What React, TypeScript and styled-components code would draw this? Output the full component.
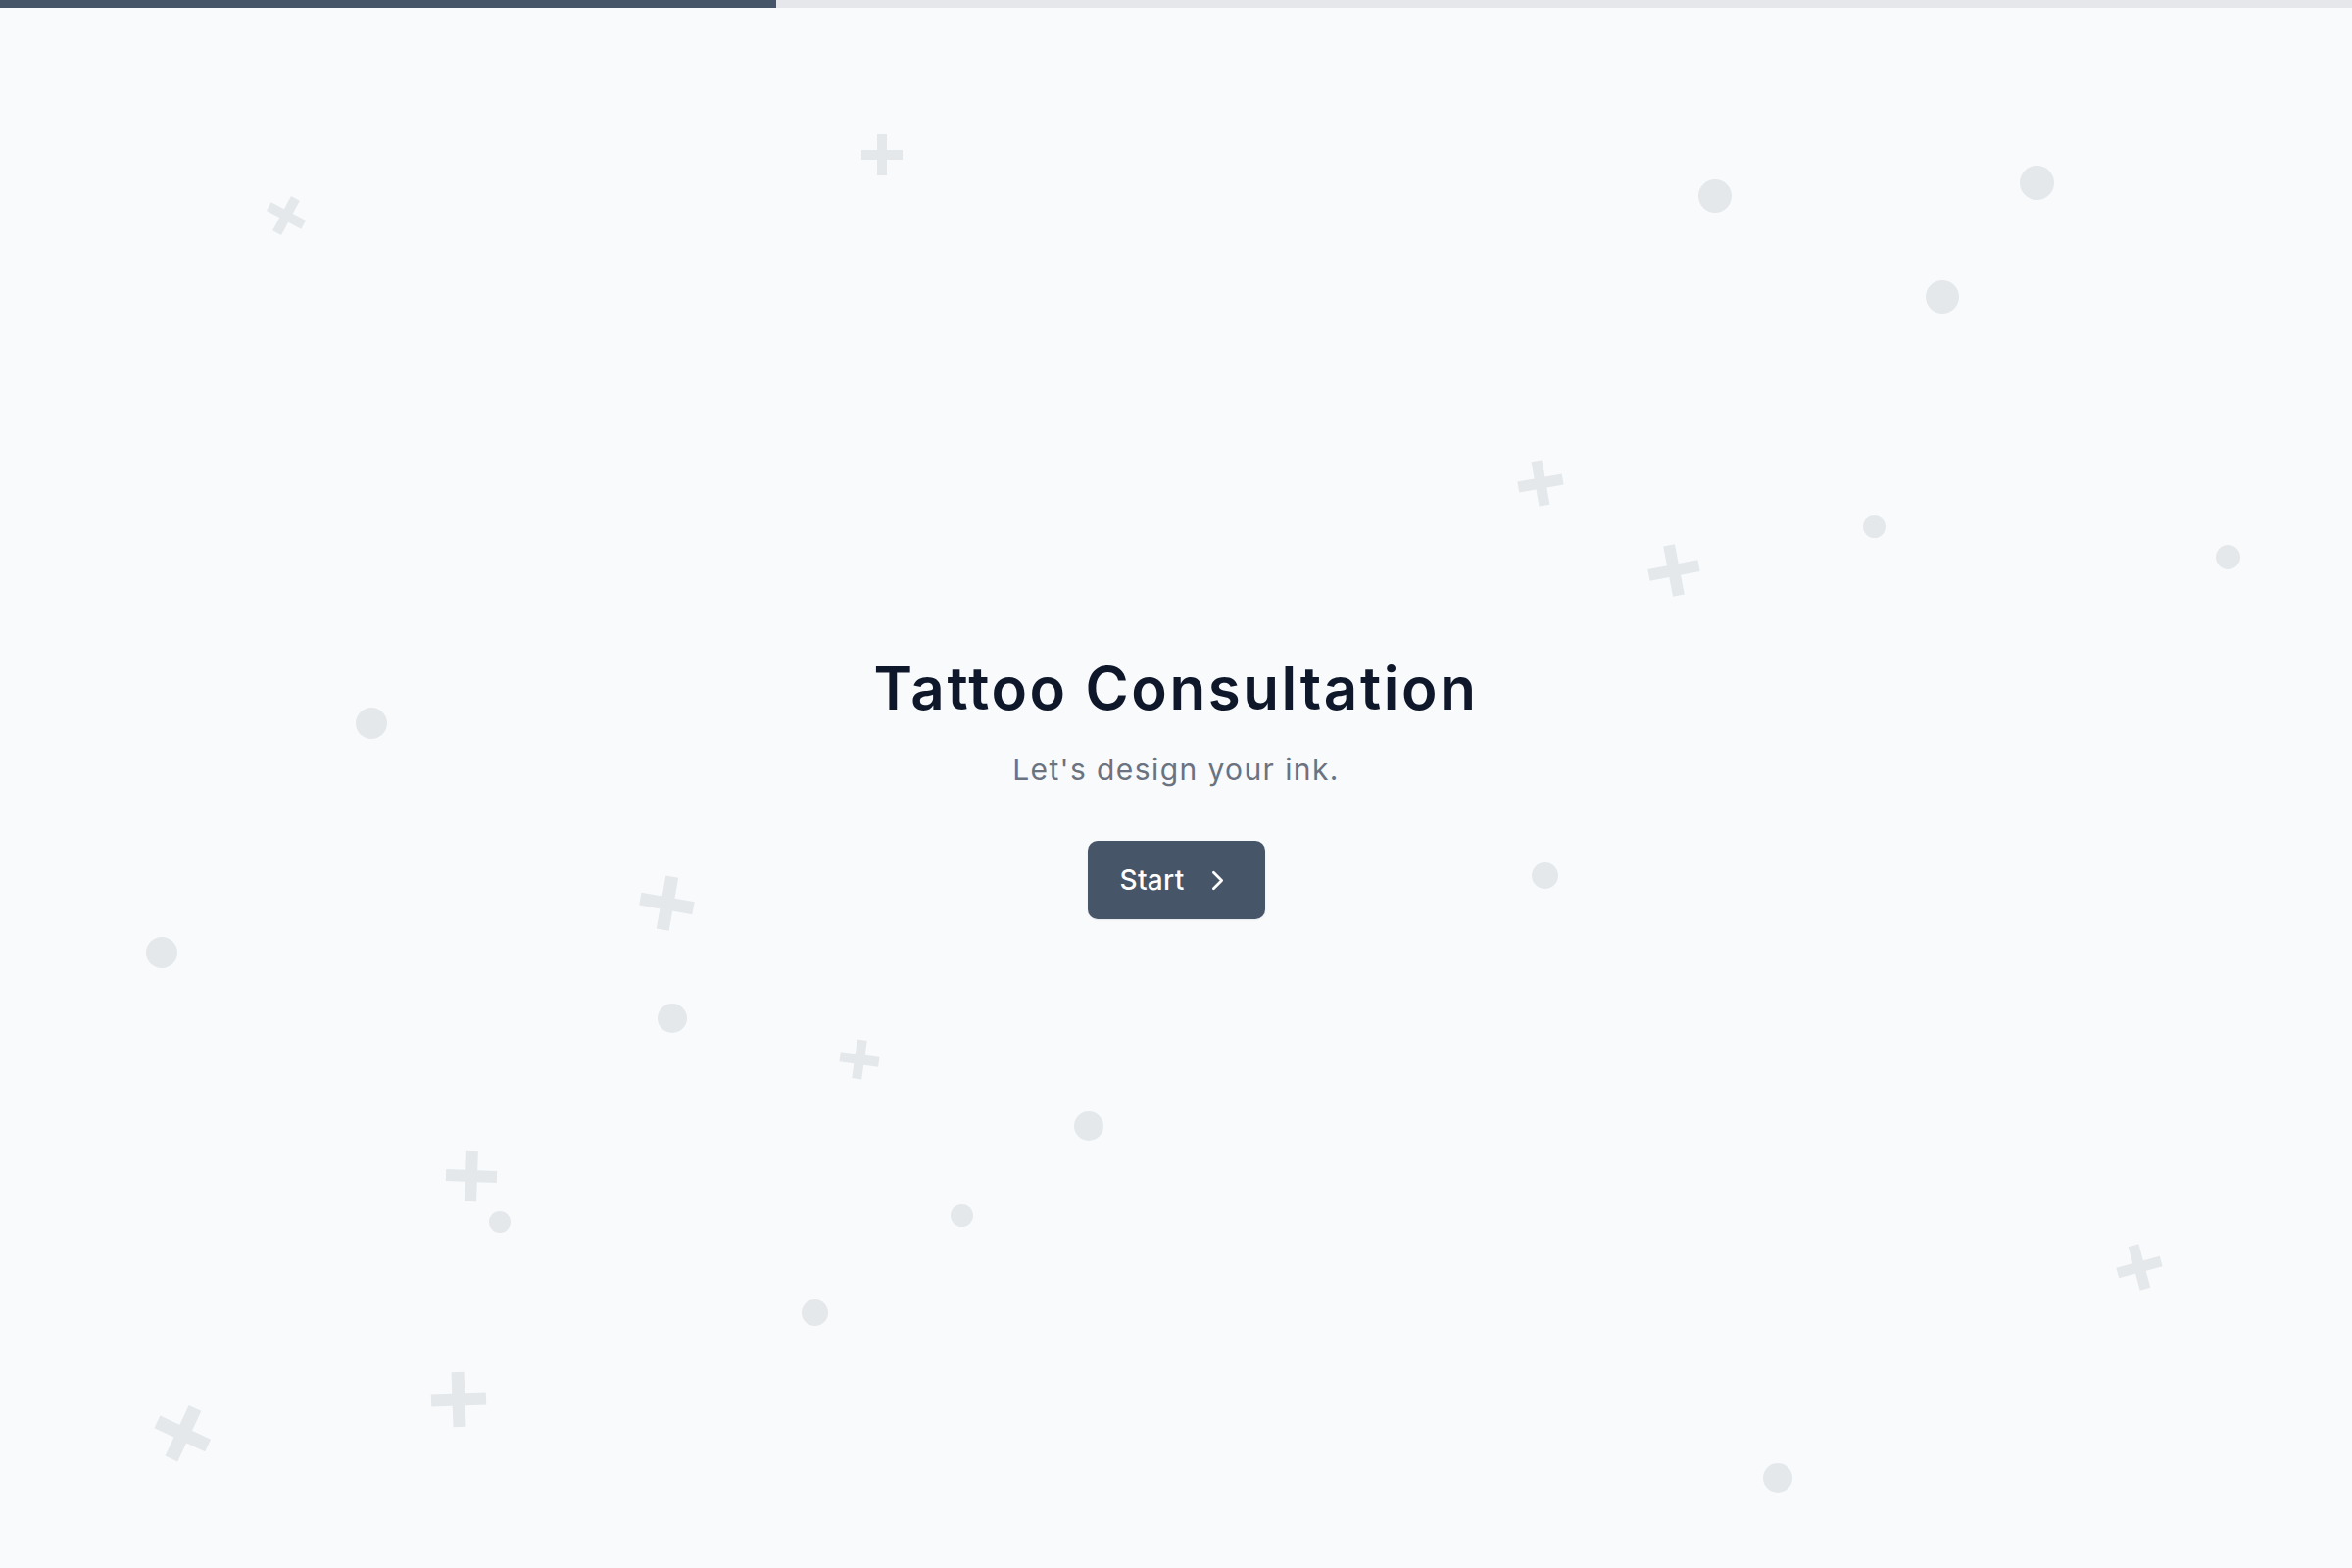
import React from 'react'
import styled, { createGlobalStyle } from 'styled-components'
import { ChevronRight } from 'lucide-react'

const GlobalStyle = createGlobalStyle`
  html, body {
    margin: 0;
    padding: 0;
    background: #f8fafc;
  }
  body {
    font-family: Inter, 'Noto Sans', sans-serif;
    -webkit-font-smoothing: antialiased;
  }
`

type Dot = { x: number; y: number; d: number }
type Cross = { x: number; y: number; s: number; r: number }

const dots: Dot[] = [
  { x: 1750, y: 200, d: 34 },
  { x: 2078, y: 186, d: 35 },
  { x: 1982, y: 303, d: 34 },
  { x: 1912, y: 537, d: 23 },
  { x: 2273, y: 568, d: 25 },
  { x: 379, y: 738, d: 32 },
  { x: 1576, y: 893, d: 27 },
  { x: 165, y: 972, d: 32 },
  { x: 686, y: 1039, d: 30 },
  { x: 1111, y: 1149, d: 30 },
  { x: 510, y: 1247, d: 22 },
  { x: 981, y: 1240, d: 23 },
  { x: 831, y: 1339, d: 27 },
  { x: 1814, y: 1508, d: 30 },
]

const crosses: Cross[] = [
  { x: 292, y: 220, s: 40, r: 28 },
  { x: 900, y: 158, s: 42, r: 0 },
  { x: 1572, y: 493, s: 46, r: -10 },
  { x: 1708, y: 582, s: 52, r: -11 },
  { x: 680, y: 921, s: 55, r: 10 },
  { x: 877, y: 1081, s: 40, r: 8 },
  { x: 481, y: 1200, s: 52, r: 2 },
  { x: 2183, y: 1293, s: 46, r: -15 },
  { x: 468, y: 1428, s: 56, r: -2 },
  { x: 186, y: 1462, s: 57, r: 25 },
]

function App() {
  return (
    <>
      <GlobalStyle />
      <Page>
        <Backdrop aria-hidden>
          {dots.map((d, i) => (
            <Circle
              key={'d' + i}
              style={{ left: d.x - d.d / 2, top: d.y - d.d / 2, width: d.d, height: d.d }}
            />
          ))}
          {crosses.map((c, i) => (
            <Plus
              key={'c' + i}
              $size={c.s}
              style={{
                left: c.x - c.s / 2,
                top: c.y - c.s / 2,
                transform: `rotate(${c.r}deg)`,
              }}
            />
          ))}
        </Backdrop>

        <Progress>
          <ProgressFill $value={33} />
        </Progress>

        <Hero>
          <Title>Tattoo Consultation</Title>
          <Subtitle>Let's design your ink.</Subtitle>
          <StartButton type="button">
            Start
            <ChevronRight size={33} strokeWidth={2} />
          </StartButton>
        </Hero>
      </Page>
    </>
  )
}

export default App

const Page = styled.div`
  position: relative;
  min-height: 100vh;
  display: flex;
  flex-direction: column;
  overflow: hidden;
  background: #f8fafc;
`

const Backdrop = styled.div`
  position: absolute;
  inset: 0;
  pointer-events: none;
`

const Circle = styled.span`
  position: absolute;
  border-radius: 50%;
  background: #e5e8eb;
`

const Plus = styled.span<{ $size: number }>`
  position: absolute;
  width: ${(p) => p.$size}px;
  height: ${(p) => p.$size}px;
  &::before,
  &::after {
    content: '';
    position: absolute;
    background: #e5e8eb;
  }
  &::before {
    left: 0;
    right: 0;
    top: 50%;
    height: ${(p) => Math.round(p.$size * 0.24)}px;
    transform: translateY(-50%);
  }
  &::after {
    top: 0;
    bottom: 0;
    left: 50%;
    width: ${(p) => Math.round(p.$size * 0.24)}px;
    transform: translateX(-50%);
  }
`

const Progress = styled.div`
  position: relative;
  height: 8px;
  width: 100%;
  background: #e5e7eb;
  flex-shrink: 0;
`

const ProgressFill = styled.div<{ $value: number }>`
  height: 100%;
  width: ${(p) => p.$value}%;
  background: #475569;
`

const Hero = styled.main`
  position: relative;
  flex: 1;
  display: flex;
  flex-direction: column;
  align-items: center;
  justify-content: center;
  text-align: center;
  padding-bottom: 4px;
`

const Title = styled.h1`
  margin: 0;
  font-size: 60px;
  line-height: 72px;
  font-weight: 600;
  letter-spacing: 2.6px;
  color: #0f172a;
`

const Subtitle = styled.p`
  margin: 29px 0 0;
  font-size: 30px;
  line-height: 36px;
  font-weight: 400;
  letter-spacing: 1.4px;
  color: #6b7280;
`

const StartButton = styled.button`
  margin-top: 55px;
  height: 80px;
  display: inline-flex;
  align-items: center;
  gap: 17px;
  padding: 0 32px 0 33px;
  border: none;
  border-radius: 10px;
  background: #475569;
  color: #ffffff;
  font-family: Inter, 'Noto Sans', sans-serif;
  font-size: 28px;
  font-weight: 500;
  letter-spacing: 0.3px;
  cursor: pointer;
  box-shadow: 0 1px 2px rgba(15, 23, 42, 0.08);
  svg {
    display: block;
  }
`
